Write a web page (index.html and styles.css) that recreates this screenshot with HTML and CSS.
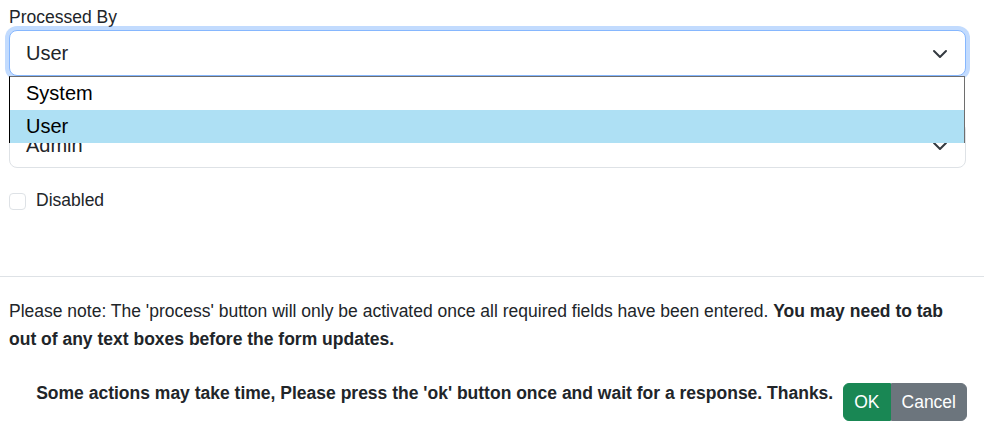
FILE: index.html
```html
<!DOCTYPE html>
<html lang="en">
<head>
<meta charset="utf-8">
<title>Process</title>
<link rel="stylesheet" href="styles.css">
</head>
<body>
<div class="form-area">
  <div class="group">
    <label class="form-label">Processed By</label>
    <div class="select-wrap">
      <div class="select focused">
        <span class="select-value">User</span>
        <svg class="chevron" width="16" height="10" viewBox="0 0 16 10"><path d="M2 2l6 6 6-6" fill="none" stroke="#343a40" stroke-width="2" stroke-linecap="round" stroke-linejoin="round"/></svg>
      </div>
      <ul class="dropdown">
        <li class="option">System</li>
        <li class="option selected">User</li>
      </ul>
    </div>
  </div>
  <div class="group">
    <label class="form-label">Role</label>
    <div class="select">
      <span class="select-value">Admin</span>
      <svg class="chevron" width="16" height="10" viewBox="0 0 16 10"><path d="M2 2l6 6 6-6" fill="none" stroke="#343a40" stroke-width="2" stroke-linecap="round" stroke-linejoin="round"/></svg>
    </div>
  </div>
  <div class="check">
    <span class="check-box"></span>
    <span class="check-label">Disabled</span>
  </div>
</div>
<hr class="divider">
<div class="footer">
  <p class="note">Please note: The 'process' button will only be activated once all required fields have been entered. <strong>You may need to tab out of any text boxes before the form updates.</strong></p>
  <div class="actions">
    <strong class="wait">Some actions may take time, Please press the 'ok' button once and wait for a response. Thanks.</strong>
    <div class="btn-group">
      <button class="btn btn-ok">OK</button>
      <button class="btn btn-cancel">Cancel</button>
    </div>
  </div>
</div>
</body>
</html>
```
FILE: styles.css
```css
* { box-sizing: border-box; }
html, body {
  margin: 0;
  padding: 0;
  background: #fff;
}
body {
  font-family: "Liberation Sans", Arial, sans-serif;
  font-size: 17.5px;
  line-height: 24px;
  color: #212529;
}
.form-area {
  padding: 5px 18px 0 9px;
}
.group {
  margin-bottom: 21px;
}
.form-label {
  display: block;
  margin-bottom: 1px;
}
.select-wrap {
  position: relative;
}
.select {
  height: 46px;
  border: 1px solid #dee2e6;
  border-radius: 8px;
  background: #fff;
  display: flex;
  align-items: center;
  justify-content: space-between;
  padding: 0 17px 0 16px;
  font-size: 20px;
  line-height: 28px;
}
.select.focused {
  border-color: #86b7fe;
  box-shadow: 0 0 0 4px rgba(13, 110, 253, 0.25);
}
.chevron {
  display: block;
  margin-top: 2px;
}
.dropdown {
  position: absolute;
  z-index: 5;
  top: 46px;
  left: 0;
  right: 1px;
  margin: 0;
  padding: 0;
  list-style: none;
  background: #fff;
  border: 1px solid #6e6e6e;
  border-left-color: #000;
  border-bottom: none;
}
.option {
  height: 33px;
  line-height: 33px;
  padding-left: 16px;
  font-size: 20px;
  color: #000;
}
.option.selected {
  background: #aee0f4;
}
.check {
  display: flex;
  align-items: flex-start;
  gap: 10px;
  height: 24px;
  position: relative;
  top: -1px;
}
.check-box {
  width: 17px;
  height: 17px;
  margin-top: 5px;
  border: 1px solid #dee2e6;
  border-radius: 4px;
  background: #fff;
}
.divider {
  border: 0;
  border-top: 1px solid #dee2e6;
  margin: 63px 0 0 0;
}
.footer {
  padding: 20px 17px 0 9px;
}
.note {
  margin: 0;
  line-height: 28px;
}
.actions {
  display: flex;
  justify-content: flex-end;
  align-items: flex-start;
  gap: 10px;
  margin-top: 28px;
}
.wait {
  font-weight: bold;
  white-space: nowrap;
}
.btn-group {
  display: flex;
  margin-top: 2px;
}
.btn {
  font-family: "Liberation Sans", Arial, sans-serif;
  font-size: 17.5px;
  line-height: 24px;
  height: 38px;
  padding: 6px 10px;
  border: 1px solid transparent;
  color: #fff;
  cursor: pointer;
}
.btn-ok {
  background: #198754;
  border-color: #198754;
  border-radius: 6px 0 0 6px;
}
.btn-cancel {
  background: #6c757d;
  border-color: #6c757d;
  border-radius: 0 6px 6px 0;
}
```
